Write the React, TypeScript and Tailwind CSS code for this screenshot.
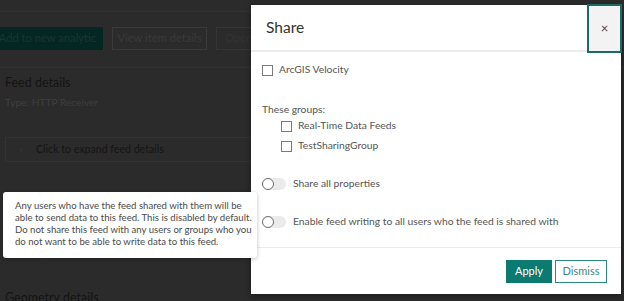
import React from 'react';

const Checkbox: React.FC = () => (
  <span className="inline-block w-[11px] h-[11px] border border-[#7a7a7a] bg-white shrink-0" />
);

const Toggle: React.FC = () => (
  <span className="relative inline-flex items-center w-[24px] h-[12px] rounded-full bg-[#ebebeb] shrink-0">
    <span className="absolute left-0 w-[12px] h-[12px] rounded-full border-[1.5px] border-[#6b6b6b] bg-white" />
  </span>
);

const App: React.FC = () => {
  return (
    <div className="relative w-[624px] h-[301px] overflow-hidden bg-[#2b2b2b] font-['Lato',sans-serif]">
      {/* page behind the overlay */}
      <div className="h-[12px] border-b border-[#333333]" />
      <div className="flex gap-[9px] pt-[15px] pb-[17px] border-b border-[#333333]">
        <div className="-ml-[8px] w-[111px] h-[23px] flex items-center justify-center bg-[#052724] text-[#1a3532] text-[11.2px]">Add to new analytic</div>
        <div className="w-[95px] h-[23px] flex items-center justify-center border border-[#3a3a3a] text-[#3a3a3a] text-[11.2px]">View item details</div>
        <div className="h-[23px] px-[8px] flex items-center border border-[#353535] text-[#333333] text-[11.2px]">Open</div>
      </div>
      <div className="pl-[5px] pt-[6px]">
        <div className="text-[12.5px] text-[#141414] leading-[18px]">Feed details</div>
        <div className="text-[10.2px] text-[#3e3e3e] leading-[16px] mt-[2px]">Type: HTTP Receiver</div>
        <div className="mt-[27px] w-[260px] h-[25px] border border-[#333333] flex items-center text-[10.6px] text-[#151515]">
          <span className="w-[30px] text-center text-[#3a3a3a]">›</span>
          <span>Click to expand feed details</span>
        </div>
        <div className="mt-[127px] text-[12.5px] text-[#141414] leading-[18px]">Geometry details</div>
      </div>

      {/* share dialog */}
      <div className="absolute left-[251px] top-[5px] w-[370px] h-[289px] bg-white flex flex-col shadow-[0_2px_6px_rgba(0,0,0,0.4)]">
        <div className="flex h-[47px] border-b-2 border-[#ececec]">
          <div className="flex-1 flex items-center pl-[15px] text-[15.5px] text-[#333333]">Share</div>
          <div className="w-[35px] -mr-px -mt-px h-[49px] border-2 border-[#1b6b63] bg-[#f3f3f3] flex items-center justify-center text-[13px] text-[#444444]">×</div>
        </div>
        <div className="flex-1 px-[11px] pt-[11px] text-[10.3px] text-[#555555]">
          <div className="flex items-center gap-[6px] h-[14px]"><Checkbox /><span>ArcGIS Velocity</span></div>
          <div className="mt-[25px] leading-[14px]">These groups:</div>
          <div className="pl-[19px] mt-[3px] flex flex-col gap-[6px]">
            <div className="flex items-center gap-[6px] h-[14px]"><Checkbox /><span>Real-Time Data Feeds</span></div>
            <div className="flex items-center gap-[6px] h-[14px]"><Checkbox /><span>TestSharingGroup</span></div>
          </div>
          <div className="mt-[24px] flex items-center gap-[7px] h-[14px]"><Toggle /><span>Share all properties</span></div>
          <div className="mt-[24px] flex items-center gap-[7px] h-[14px]"><Toggle /><span>Enable feed writing to all users who the feed is shared with</span></div>
        </div>
        <div className="h-[47px] border-t border-[#ececec] flex items-center justify-end gap-[3px] pr-[14px]">
          <button className="w-[46px] h-[23px] bg-[#0b7a70] text-white text-[11px]">Apply</button>
          <button className="w-[52px] h-[23px] border border-[#2b8a80] text-[#3a8a82] text-[11px]">Dismiss</button>
        </div>
      </div>

      {/* tooltip */}
      <div className="absolute left-[3px] top-[192px] w-[254px] h-[66px] bg-white rounded-[3px] pl-[12px] pt-[8px] text-[9.6px] leading-[12px] text-[#4a4a4a] shadow-[0_1px_4px_rgba(0,0,0,0.25)]">
        Any users who have the feed shared with them will be<br />
        able to send data to this feed. This is disabled by default.<br />
        Do not share this feed with any users or groups who you<br />
        do not want to be able to write data to this feed.
      </div>
    </div>
  );
};

export default App;
